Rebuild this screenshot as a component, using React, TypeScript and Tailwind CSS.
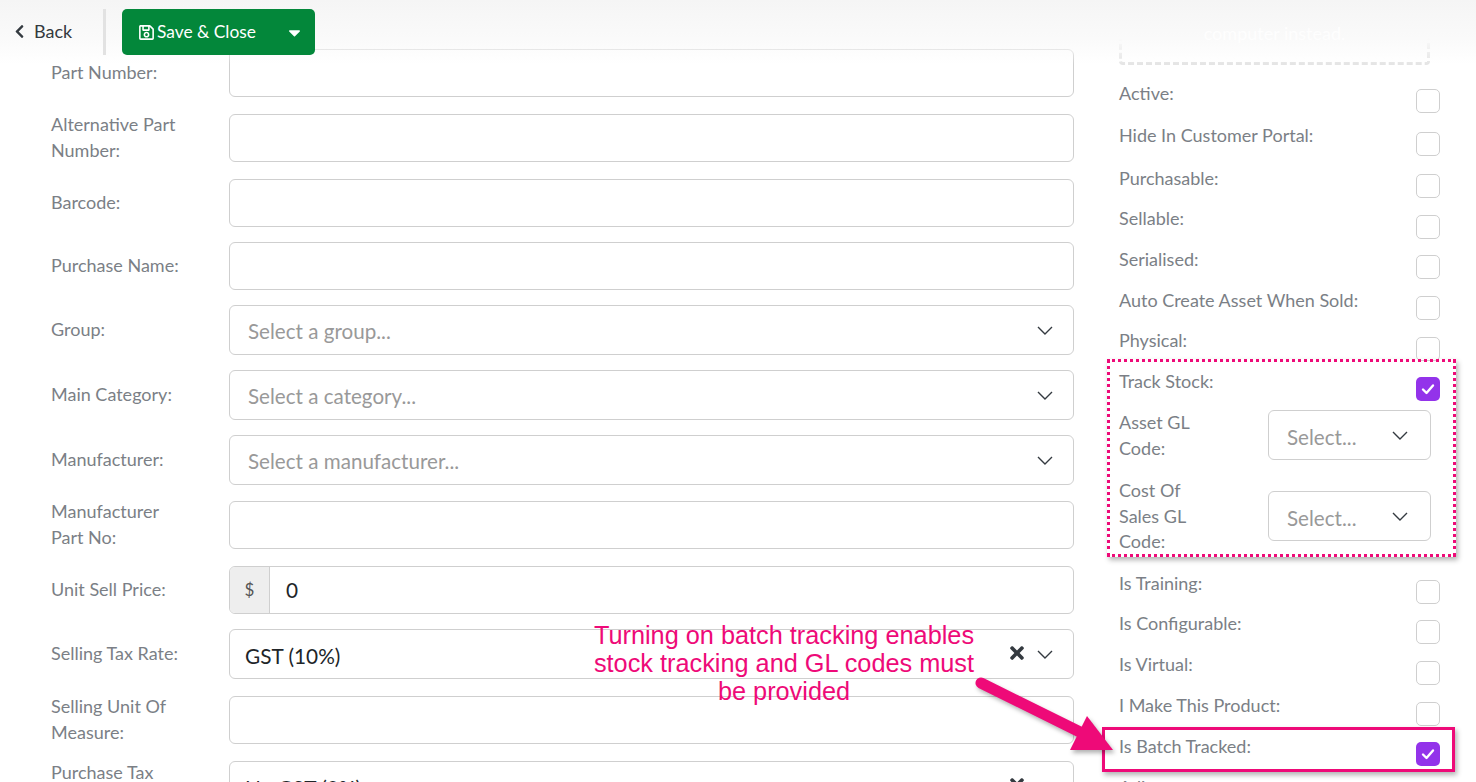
import { FaCaretDown, FaChevronLeft, FaRegSave, FaTimes } from "react-icons/fa";

type FieldKind = "text" | "select" | "money" | "value";

type Field = {
  label: string;
  kind: FieldKind;
  value?: string;
  rowClass: string;
};

const fields: Field[] = [
  { label: "Part Number:", kind: "text", rowClass: "h-[48px] mb-[17px]" },
  { label: "Alternative Part Number:", kind: "text", rowClass: "h-[48px] mb-[17px]" },
  { label: "Barcode:", kind: "text", rowClass: "h-[48px] mb-[15px]" },
  { label: "Purchase Name:", kind: "text", rowClass: "h-[48px] mb-[15px]" },
  { label: "Group:", kind: "select", value: "Select a group...", rowClass: "h-[50px] mb-[15px]" },
  { label: "Main Category:", kind: "select", value: "Select a category...", rowClass: "h-[50px] mb-[15px]" },
  { label: "Manufacturer:", kind: "select", value: "Select a manufacturer...", rowClass: "h-[50px] mb-[16px]" },
  { label: "Manufacturer Part No:", kind: "text", rowClass: "h-[48px] mb-[17px]" },
  { label: "Unit Sell Price:", kind: "money", value: "0", rowClass: "h-[48px] mb-[15px]" },
  { label: "Selling Tax Rate:", kind: "value", value: "GST (10%)", rowClass: "h-[50px] mb-[17px]" },
  { label: "Selling Unit Of Measure:", kind: "text", rowClass: "h-[48px] mb-[17px]" },
  { label: "Purchase Tax Rate:", kind: "value", value: "No GST (0%)", rowClass: "h-[50px]" },
];

type Toggle = { label: string; checked?: boolean; rowClass: string; labelClass?: string; boxClass?: string };

const topToggles: Toggle[] = [
  { label: "Active:", rowClass: "h-[42px]", labelClass: "-mt-px", boxClass: "mt-[8px]" },
  { label: "Hide In Customer Portal:", rowClass: "h-[43px]", labelClass: "-mt-px", boxClass: "mt-[9px]" },
  { label: "Purchasable:", rowClass: "h-[40px]", labelClass: "-mt-px", boxClass: "mt-[8px]" },
  { label: "Sellable:", rowClass: "h-[40px]", labelClass: "-mt-px", boxClass: "mt-[9px]" },
  { label: "Serialised:", rowClass: "h-[41px]", boxClass: "mt-[9px]" },
  { label: "Auto Create Asset When Sold:", rowClass: "h-[41px]", boxClass: "mt-[9px]" },
  { label: "Physical:", rowClass: "h-[40px]", labelClass: "-mt-px", boxClass: "mt-[9px]" },
  { label: "Track Stock:", checked: true, rowClass: "h-[42px]", boxClass: "mt-[9px]" },
];

const bottomToggles: Toggle[] = [
  { label: "Is Training:", rowClass: "h-[40px]", boxClass: "mt-[10px]" },
  { label: "Is Configurable:", rowClass: "h-[41px]", boxClass: "mt-[10px]" },
  { label: "Is Virtual:", rowClass: "h-[41px]", boxClass: "mt-[10px]" },
  { label: "I Make This Product:", rowClass: "h-[40px]", boxClass: "mt-[10px]" },
  { label: "Is Batch Tracked:", checked: true, rowClass: "h-[41px]", labelClass: "mt-px", boxClass: "mt-[10px]" },
  { label: "Adjust:", rowClass: "h-[41px]", labelClass: "mt-px", boxClass: "mt-[10px]" },
];

function Chevron() {
  return (
    <svg width="16" height="9" viewBox="0 0 16 9" fill="none" className="shrink-0">
      <path d="M1 1l7 7 7-7" stroke="#343a40" strokeWidth="1.4" />
    </svg>
  );
}

function FieldBox({ field }: { field: Field }) {
  if (field.kind === "text") {
    return <div className="h-full rounded-[6px] border border-[#cfcfcf] bg-white" />;
  }

  if (field.kind === "money") {
    return (
      <div className="flex h-full overflow-hidden rounded-[6px] border border-[#cfcfcf] bg-white">
        <div className="flex w-[40px] items-center justify-center border-r border-[#cfcfcf] bg-[#eeeeee] text-[17px] text-[#555]">$</div>
        <div className="flex items-center pl-[16px] text-[20.8px] text-[#212529]">{field.value}</div>
      </div>
    );
  }

  return (
    <div className="flex h-full items-center rounded-[6px] border border-[#cfcfcf] bg-white pr-[20px]">
      {field.kind === "select" ? (
        <span className="pl-[18px] pt-[3px] text-[20.6px] text-[#999999]">{field.value}</span>
      ) : (
        <span className="pl-[15px] pt-[3px] text-[20.8px] text-[#212529]">{field.value}</span>
      )}
      <span className="ml-auto flex items-center gap-[10px]">
        {field.kind === "value" ? <FaTimes className="-mt-[3px] text-[20px] text-[#343a40]" /> : null}
        <Chevron />
      </span>
    </div>
  );
}

function CheckBox({ checked }: { checked?: boolean }) {
  if (checked) {
    return (
      <span className="flex h-[24px] w-[24px] items-center justify-center rounded-[5px] bg-[#9333ea]">
        <svg width="14" height="12" viewBox="0 0 14 12" fill="none">
          <path d="M2 6.5l3.5 3.5L12 2.5" stroke="white" strokeWidth="2.4" strokeLinecap="round" strokeLinejoin="round" />
        </svg>
      </span>
    );
  }
  return <span className="block h-[24px] w-[24px] rounded-[5px] border border-[#cfcfcf] bg-white" />;
}

function ToggleRow({ toggle }: { toggle: Toggle }) {
  return (
    <div className={`flex items-start justify-between ${toggle.rowClass}`}>
      <span className={`text-[18px] leading-[26px] text-[#7b7f86] ${toggle.labelClass ?? ""}`}>{toggle.label}</span>
      <span className={toggle.boxClass}>
        <CheckBox checked={toggle.checked} />
      </span>
    </div>
  );
}

function GlSelect({ label, rowClass, boxClass }: { label: string; rowClass: string; boxClass: string }) {
  return (
    <div className={`flex items-start ${rowClass}`}>
      <span className="mr-[54px] w-[95px] text-[18px] leading-[25.5px] text-[#7b7f86]">{label}</span>
      <div className={`flex h-[50px] w-[163px] items-center justify-between rounded-[6px] border border-[#cfcfcf] bg-white pl-[18px] pr-[22px] ${boxClass}`}>
        <span className="pt-[4px] text-[20.6px] text-[#999999]">Select...</span>
        <Chevron />
      </div>
    </div>
  );
}

export default function App() {
  return (
    <div className="relative h-[782px] w-[1476px] overflow-hidden bg-white font-['Lato','Liberation_Sans',sans-serif]">
      <div className="flex">
        <div className="w-[1074px] shrink-0 pl-[51px] pt-[49px]">
          {fields.map((field) => (
            <div key={field.label} className={`flex items-center ${field.rowClass}`}>
              <label className="-mt-[2px] w-[178px] shrink-0 pr-[40px] text-[18px] leading-[26px] text-[#7b7f86]">{field.label}</label>
              <div className="h-full flex-1">
                <FieldBox field={field} />
              </div>
            </div>
          ))}
        </div>

        <div className="ml-[45px] w-[321px] shrink-0">
          <div className="-mt-[40px] mb-[16px] flex h-[105px] w-[311px] items-end justify-center rounded-[4px] border-[3px] border-dashed border-[#e5e5e5] pb-[15px] text-[18px] text-[#fefefe]">
            <span className="relative z-10">computer instead.</span>
          </div>
          {topToggles.map((toggle) => (
            <ToggleRow key={toggle.label} toggle={toggle} />
          ))}
          <GlSelect label="Asset GL Code:" rowClass="h-[68px]" boxClass="" />
          <GlSelect label="Cost Of Sales GL Code:" rowClass="h-[92px]" boxClass="mt-[13px]" />
          {bottomToggles.map((toggle) => (
            <ToggleRow key={toggle.label} toggle={toggle} />
          ))}
        </div>
      </div>

      {/* top action bar sits over the scrolled form */}
      <div className="absolute inset-x-0 top-0 flex h-[64px] items-start bg-gradient-to-b from-[#f5f5f5] via-[#fafafa] via-60% to-white/0 pt-[9px]">
        <div className="-mt-[1px] flex h-[46px] w-[103px] items-center pl-[12px] text-[18px] text-[#343a40]">
          <FaChevronLeft className="mr-[7px] text-[15px]" />
          Back
        </div>
        <div className="h-[46px] w-[3px] bg-[#e2e2e2]" />
        <button className="ml-[16px] flex h-[46px] w-[193px] items-center rounded-[5px] bg-[#03873a] pl-[16px] text-[17.33px] text-white">
          <FaRegSave className="mr-[2px] text-[17px]" />
          Save &amp; Close
          <FaCaretDown className="ml-auto mr-[11px] text-[19px]" />
        </button>
      </div>

      {/* annotations drawn on top of the screenshot */}
      <div className="absolute left-[1107px] top-[359px] h-[198px] w-[349px] border-[3px] border-dotted border-[#ee0a78] shadow-[2px_3px_5px_rgba(0,0,0,0.3)]" />
      <div className="absolute left-[1102px] top-[727px] h-[45px] w-[353px] border-[3px] border-[#ee0a78] shadow-[2px_3px_5px_rgba(0,0,0,0.3)]" />
      <div className="absolute left-[564px] top-[621px] w-[440px] text-center font-['Liberation_Sans',sans-serif] text-[25.3px] leading-[28px] text-[#ee0a78]">
        Turning on batch tracking enables
        <br />
        stock tracking and GL codes must
        <br />
        be provided
      </div>
      <svg className="absolute left-[970px] top-[670px] drop-shadow-[2px_3px_2px_rgba(0,0,0,0.3)]" width="150" height="90" viewBox="970 670 150 90" fill="none">
        <path d="M981 683L1082 733" stroke="#ee0a78" strokeWidth="11" strokeLinecap="round" />
        <path d="M1087 716L1070 750L1113 750Z" fill="#ee0a78" />
      </svg>
    </div>
  );
}
